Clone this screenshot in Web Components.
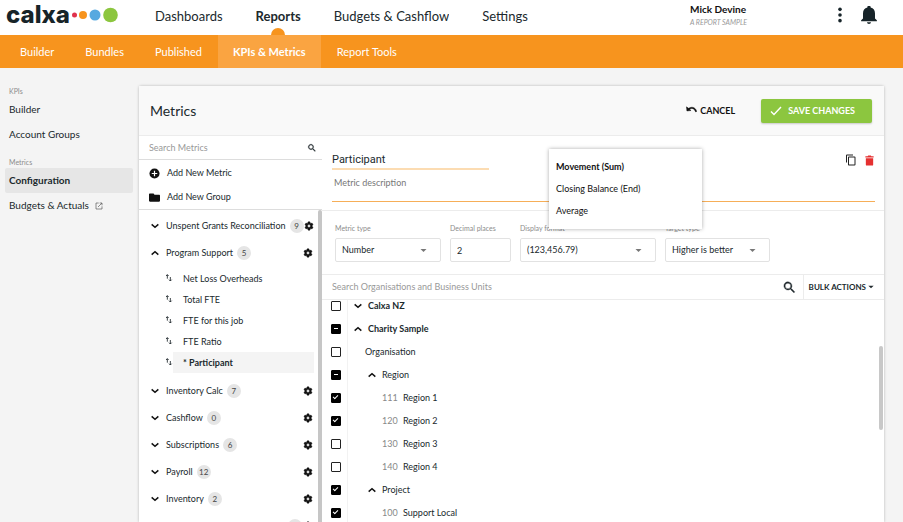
<!DOCTYPE html>
<html lang="en">
<head>
<meta charset="utf-8">
<title>Metrics</title>
<style>
  html, body { height: 100%; }

  body {
    margin: 0;
    overflow: hidden;
    font: 9px/12px Lato, "Liberation Sans", sans-serif;
    color: #20292d;
    background: #f4f4f4;
    --orange: #f7941e;
    --green: #8cc63f;
    --line: #ececec;
    --muted: #999;
  }
</style>
</head>
<body>
<metrics-app></metrics-app>

<script>
const define = (name, html, setup) => {
  const template = document.createElement("template");
  template.innerHTML = html;

  customElements.define(name, class extends HTMLElement {
    constructor() {
      super();
      this.attachShadow({ mode: "open" }).append(template.content.cloneNode(true));
    }

    $(x) { return this.shadowRoot.querySelector(x); }

    connectedCallback() {
      if (setup) setup(this);
    }
  });
};

const ICONS = {
  down: '<path d="M4 8l8 7 8-7" fill="none" stroke="currentColor" stroke-width="3.6"/>',
  up: '<path d="M4 16l8-7 8 7" fill="none" stroke="currentColor" stroke-width="3.6"/>',
  caret: '<path d="M4 8h16l-8 8z"/>',
  search: '<path d="M15.5 14h-.8l-.3-.3A6.5 6.5 0 1 0 13.700 14.400l.3.3v.8l5 5 1.500-1.500zm-6 0a4.500 4.500 0 1 1 0-9 4.500 4.500 0 0 1 0 9z" stroke="currentColor" stroke-width=".6"/>',
  gear: '<path d="M19.430 12.980c.04-.32.07-.64.07-.98s-.03-.66-.07-.98l2.110-1.650c.19-.15.24-.42.12-.64l-2-3.460c-.12-.22-.39-.3-.61-.22l-2.490 1c-.52-.4-1.080-.73-1.690-.98l-.38-2.650A.49.49 0 0 0 14 2h-4c-.25 0-.46.18-.49.42l-.38 2.650c-.61.25-1.170.59-1.690.98l-2.490-1c-.23-.09-.49 0-.61.22l-2 3.460c-.13.22-.07.49.12.64l2.110 1.650c-.04.32-.07.65-.07.98s.03.66.07.98l-2.110 1.650c-.19.15-.24.42-.12.64l2 3.460c.12.22.39.3.61.22l2.490-1c.52.4 1.080.73 1.690.98l.38 2.650c.03.24.24.42.49.42h4c.25 0 .46-.18.49-.42l.38-2.650c.61-.25 1.170-.59 1.690-.98l2.490 1c.23.09.49 0 .61-.22l2-3.460c.12-.22.07-.49-.12-.64zM12 15.500a3.500 3.500 0 1 1 0-7 3.500 3.500 0 0 1 0 7z" stroke="currentColor"/>',
  plus: '<circle cx="12" cy="12" r="11"/><path d="M12 6v12M6 12h12" stroke="#fff" stroke-width="2.600"/>',
  folder: '<path d="M10 3H2C1 3 0 4 0 5v14c0 1 1 2 2 2h20c1 0 2-1 2-2V8c0-1-1-2-2-2H12z"/>',
  arrows: '<path d="M7 14V2M3 6l4-4 4 4M16 9v12M12 17l4 4 4-4" fill="none" stroke="currentColor" stroke-width="2.600"/>',
  external: '<path d="M11 3H3v18h18v-8M14 3h7v7M21 3L9 15" fill="none" stroke="currentColor" stroke-width="2"/>',
  undo: '<path d="M1 4l1 9 9-1-3.200-2.900C12 6 18 7 21 15l2.500-1C20 4 12 3 5.800 7.300z" stroke="currentColor"/>',
  check: '<path d="M2 13l6 6L22 4" fill="none" stroke="currentColor" stroke-width="2.800"/>',
  copy: '<path d="M16 1H4a2 2 0 0 0-2 2v14h2V3h12zM19 5H8a2 2 0 0 0-2 2v14c0 1.100.9 2 2 2h11a2 2 0 0 0 2-2V7a2 2 0 0 0-2-2zm0 16H8V7h11z"/>',
  trash: '<path d="M4 7h16v14a2 2 0 0 1-2 2H6a2 2 0 0 1-2-2zM3 2.500h5L9 1h6l1 1.500h5V5.500H3z"/>',
  dots: '<circle cx="12" cy="3.500" r="2.700"/><circle cx="12" cy="12" r="2.700"/><circle cx="12" cy="20.500" r="2.700"/>',
  bell: '<path d="M12 24c1.500 0 2.600-1 2.600-2.300H9.400C9.400 23 10.500 24 12 24zM20 16.500V10c0-4-2-7-5.800-7.900V1.800a2.200 2.200 0 0 0-4.400 0v.3C6 3 4 6 4 10v6.500L1.500 19v1.400h21V19z"/>'
};

define("ui-icon", `
  <style>
    :host { display: block; flex: none; width: 10px; height: 10px; }
    svg { display: block; width: 100%; height: 100%; fill: currentColor; }
  </style>
  <svg viewBox="0 0 24 24" aria-hidden="true"></svg>
`, el => {
  el.$("svg").innerHTML = ICONS[el.getAttribute("name")];
});

define("brand-logo", `
  <style>
    :host { display: flex; align-items: flex-start; color: #172429; }
    b { width: 66px; font: 800 24px/30px Inter, sans-serif; }
    svg { display: block; width: 46px; height: 16px; margin-top: 7px; }
  </style>
  <b>calxa</b>
  <svg viewBox="0 0 46 16" aria-hidden="true">
    <circle cx="2.500" cy="8" r="2.500" fill="#e0314d"/>
    <circle cx="11" cy="8" r="4" fill="#f7941e"/>
    <circle cx="23" cy="8" r="5.500" fill="#56a9e0"/>
    <circle cx="38.500" cy="8" r="7.300" fill="#8cc63f"/>
  </svg>
`);

define("app-header", `
  <style>
    :host { display: flex; align-items: stretch; height: 35px; flex: none; padding-left: 6px; background: #fff; }
    brand-logo { width: 149px; }
    nav { display: flex; gap: 33px; flex: 1; }
    a {
      position: relative;
      padding-top: 7px;
      overflow: hidden;
      color: inherit;
      font-size: 13px;
      line-height: 18px;
      text-decoration: none;
    }
    a[aria-current] { font-weight: 700; }
    a[aria-current]::after {
      content: "";
      position: absolute;
      left: 50%;
      bottom: -7px;
      width: 14px;
      height: 14px;
      margin-left: -7px;
      border-radius: 50%;
      background: var(--orange);
    }
    .user { width: 142px; padding-top: 3px; }
    .user b { display: block; font-size: 10px; line-height: 13px; color: #111; }
    .user small { display: block; font-size: 7px; font-style: italic; color: var(--muted); }
    .tools { display: flex; gap: 12px; padding: 6px 25px 0 0; }
    button { padding: 0; border: 0; background: none; color: #172429; height: 18px; }
    ui-icon { width: 18px; height: 18px; }
    .more ui-icon { width: 16px; height: 18px; }
  </style>
  <brand-logo></brand-logo>
  <nav>
    <a href="#">Dashboards</a>
    <a href="#" aria-current="page">Reports</a>
    <a href="#">Budgets &amp; Cashflow</a>
    <a href="#">Settings</a>
  </nav>
  <div class="user"><b>Mick Devine</b><small>A REPORT SAMPLE</small></div>
  <div class="tools">
    <button class="more" aria-label="More"><ui-icon name="dots"></ui-icon></button>
    <button aria-label="Notifications"><ui-icon name="bell"></ui-icon></button>
  </div>
`);

define("report-tabs", `
  <style>
    :host { display: flex; gap: 1px; height: 33px; flex: none; padding-left: 5px; background: var(--orange); }
    a { padding: 0 15px; color: #fff; font-size: 11px; line-height: 33px; text-decoration: none; }
    a[aria-current] { font-weight: 700; background: #faa441; }
  </style>
  <a href="#">Builder</a>
  <a href="#">Bundles</a>
  <a href="#">Published</a>
  <a href="#" aria-current="page">KPIs &amp; Metrics</a>
  <a href="#">Report Tools</a>
`);

define("side-nav", `
  <style>
    :host { display: block; width: 128px; flex: none; padding: 17px 6px 0 5px; }
    h2 { margin: 0; padding-left: 4px; font-size: 7px; line-height: 12px; font-weight: 400; color: #8c8c8c; }
    ul { list-style: none; margin: 0 0 9px; padding: 0; }
    a {
      display: flex;
      align-items: center;
      gap: 6px;
      padding-left: 4px;
      font-size: 10px;
      line-height: 25px;
      color: inherit;
      text-decoration: none;
      border-radius: 2px;
    }
    a[aria-current] { font-weight: 700; background: #e6e6e6; }
    ui-icon { width: 8px; height: 8px; color: #555; }
  </style>
  <h2>KPIs</h2>
  <ul>
    <li><a href="#">Builder</a></li>
    <li><a href="#">Account Groups</a></li>
  </ul>
  <h2>Metrics</h2>
  <ul>
    <li><a href="#" aria-current="page">Configuration</a></li>
    <li><a href="#">Budgets &amp; Actuals <ui-icon name="external"></ui-icon></a></li>
  </ul>
`);

define("panel-header", `
  <style>
    :host { display: flex; align-items: center; height: 49px; flex: none; padding: 0 12px 0 11px; background: #f9f9f9; border-bottom: 1px solid var(--line); }
    h1 { flex: 1; margin: 0; font-size: 14px; line-height: 20px; font-weight: 400; }
    button { display: flex; align-items: center; font: inherit; font-weight: 700; border: 0; }
    .cancel { gap: 3px; margin-right: 26px; padding: 0; color: #111; background: none; }
    .cancel ui-icon { width: 11px; height: 11px; }
    .save { gap: 6px; height: 24px; padding: 0 17px 0 9px; color: #fff; background: var(--green); border-radius: 2px; box-shadow: 0 1px 2px #0003; }
    .save ui-icon { width: 12px; height: 12px; }
  </style>
  <h1>Metrics</h1>
  <button class="cancel"><ui-icon name="undo"></ui-icon>CANCEL</button>
  <button class="save"><ui-icon name="check"></ui-icon>SAVE CHANGES</button>
`);

define("metric-group", `
  <style>
    :host { display: block; }
    .head { display: flex; align-items: center; height: 27px; padding: 0 5px 0 11px; }
    .head ui-icon { color: #111; }
    button { padding: 0; border: 0; background: none; font: inherit; }
    .gear { margin-left: auto; }
    .toggle { margin-right: 6px; }
    .name { white-space: nowrap; }
    .name:empty { width: 118px; }
    .badge {
      min-width: 14px;
      min-height: 14px;
      margin-left: 4px;
      text-align: center;
      font-size: 8px;
      line-height: 14px;
      border-radius: 7px;
      background: #e5e5e5;
      color: #444;
    }
    .items:not([hidden]) { display: block; padding: 2px 0 4px; }
  </style>
  <div class="head">
    <button class="toggle" aria-label="Toggle group"><ui-icon></ui-icon></button>
    <span class="name"></span>
    <span class="badge"></span>
    <button class="gear" aria-label="Group settings"><ui-icon name="gear"></ui-icon></button>
  </div>
  <div class="items"><slot></slot></div>
`, el => {
  const open = el.hasAttribute("open");
  const icon = document.createElement("ui-icon");
  icon.setAttribute("name", open ? "up" : "down");
  el.$(".toggle").replaceChildren(icon);
  el.$(".name").textContent = el.getAttribute("name");
  el.$(".badge").textContent = el.getAttribute("count");
  el.$(".items").hidden = !open;
});

define("metric-item", `
  <style>
    :host { display: flex; align-items: center; height: 21px; padding: 0 4px 0 26px; }
    ui-icon { width: 8px; height: 8px; margin-bottom: 2px; }
    a { flex: 1; padding-left: 10px; line-height: 21px; color: inherit; text-decoration: none; }
    :host([selected]) a { background: #f4f4f4; font-weight: 700; }
  </style>
  <ui-icon name="arrows"></ui-icon>
  <a href="#"><slot></slot></a>
`);

define("metric-list", `
  <style>
    :host { display: flex; flex-direction: column; width: 183px; flex: none; }
    .search { display: flex; align-items: center; height: 23px; padding: 0 5px 0 10px; border-bottom: 1px solid #ddd; }
    input { flex: 1; min-width: 0; padding: 0; border: 0; outline: 0; background: none; font: inherit; }
    input::placeholder { color: var(--muted); opacity: 1; }
    .actions { padding: 1px 0 0; border-bottom: 1px solid #ddd; }
    .actions button { display: flex; align-items: center; gap: 7px; width: 100%; height: 24px; padding: 0 10px; border: 0; background: none; font: inherit; color: inherit; }
    .scroll { display: flex; flex: 1; min-height: 0; }
    .groups { flex: 1; min-width: 0; overflow: hidden; padding-top: 2px; }
    .track { width: 4px; background: #c6c6c6; border-radius: 2px 2px 0 0; }
    .actions ui-icon { width: 11px; height: 11px; color: #111; }
  </style>
  <div class="search">
    <input type="search" placeholder="Search Metrics" aria-label="Search metrics">
    <ui-icon name="search"></ui-icon>
  </div>
  <div class="actions">
    <button><ui-icon name="plus"></ui-icon>Add New Metric</button>
    <button><ui-icon name="folder"></ui-icon>Add New Group</button>
  </div>
  <div class="scroll">
    <div class="groups">
      <metric-group name="Unspent Grants Reconciliation" count="9"></metric-group>
      <metric-group name="Program Support" count="5" open>
        <metric-item>Net Loss Overheads</metric-item>
        <metric-item>Total FTE</metric-item>
        <metric-item>FTE for this job</metric-item>
        <metric-item>FTE Ratio</metric-item>
        <metric-item selected>* Participant</metric-item>
      </metric-group>
      <metric-group name="Inventory Calc" count="7"></metric-group>
      <metric-group name="Cashflow" count="0"></metric-group>
      <metric-group name="Subscriptions" count="6"></metric-group>
      <metric-group name="Payroll" count="12"></metric-group>
      <metric-group name="Inventory" count="2"></metric-group>
      <metric-group name="" count=""></metric-group>
    </div>
    <div class="track"></div>
  </div>
`);

define("select-field", `
  <style>
    :host { display: block; }
    label { display: block; font-size: 7px; color: #8c8c8c; line-height: 12px; margin-bottom: 4px; }
    .box { display: flex; align-items: center; height: 22px; border: 1px solid #e2e2e2; border-radius: 2px; background: #fff; }
    select, input {
      flex: 1;
      min-width: 0;
      height: 100%;
      padding: 0 6px;
      border: 0;
      outline: 0;
      appearance: none;
      background: none;
      font: inherit;
      color: inherit;
    }
    ui-icon { width: 9px; height: 9px; margin-right: 12px; color: #777; }
  </style>
  <label for="control"></label>
  <div class="box"></div>
`, el => {
  const value = el.getAttribute("value");
  el.$("label").textContent = el.getAttribute("label");
  el.$(".box").innerHTML = el.hasAttribute("text")
    ? `<input id="control" value="${value}">`
    : `<select id="control"><option>${value}</option></select><ui-icon name="caret"></ui-icon>`;
});

define("option-menu", `
  <style>
    :host { display: block; padding: 7px 0; background: #fff; box-shadow: 0 0 4px #0005; color: #111; }
    ul { list-style: none; margin: 0; padding: 0; }
    li { padding-left: 7px; line-height: 22px; }
    [aria-selected="true"] { font-weight: 700; }
  </style>
  <ul role="listbox" aria-label="Aggregation">
    <li role="option" aria-selected="true">Movement (Sum)</li>
    <li role="option" aria-selected="false">Closing Balance (End)</li>
    <li role="option" aria-selected="false">Average</li>
  </ul>
`);

define("metric-editor", `
  <style>
    :host { display: block; position: relative; }
    .details { display: flex; height: 75px; box-sizing: border-box; padding: 15px 9px 9px 10px; border-bottom: 1px solid var(--line); justify-content: space-between; flex-wrap: wrap; }
    input { box-sizing: border-box; padding: 0; border: 0; border-radius: 0; outline: 0; background: none; color: inherit; }
    .name { width: 157px; height: 19px; border-bottom: 2px solid #fcdcb2; font: 11px/16px Roboto, sans-serif; }
    .about { width: 100%; height: 32px; padding: 0 2px 7px; border-bottom: 1px solid #f6ae58; font: inherit; }
    .about::placeholder { color: #777; opacity: 1; }
    .tools { display: flex; gap: 7px; padding-top: 3px; }
    button { height: 12px; padding: 0; border: 0; background: none; color: #222; }
    .tools ui-icon { width: 12px; height: 12px; }
    .delete { color: #e53030; }
    .delete ui-icon { width: 11px; height: 11px; }
    .fields { display: flex; gap: 9px; padding: 11px 13px 12px; border-bottom: 1px solid var(--line); }
    .type { width: 106px; }
    .places { width: 61px; }
    .format { width: 136px; }
    .target { width: 105px; }
    option-menu { position: absolute; left: 227px; top: 13px; width: 153px; box-sizing: border-box; z-index: 1; }
  </style>
  <div class="details">
    <input class="name" value="Participant" aria-label="Metric name">
    <div class="tools">
      <button aria-label="Duplicate"><ui-icon name="copy"></ui-icon></button>
      <button class="delete" aria-label="Delete"><ui-icon name="trash"></ui-icon></button>
    </div>
    <input class="about" placeholder="Metric description" aria-label="Metric description">
  </div>
  <div class="fields">
    <select-field class="type" label="Metric type" value="Number"></select-field>
    <select-field class="places" label="Decimal places" value="2" text></select-field>
    <select-field class="format" label="Display format" value="(123,456.79)"></select-field>
    <select-field class="target" label="Target type" value="Higher is better"></select-field>
  </div>
  <option-menu></option-menu>
`);

define("unit-row", `
  <style>
    :host { display: flex; align-items: center; height: 23px; }
    label { display: flex; align-items: center; }
    input {
      appearance: none;
      width: 10px;
      height: 10px;
      margin: 0 12px 0 0;
      border: 1px solid #222;
      border-radius: 1px;
      box-sizing: border-box;
      position: relative;
    }
    input:checked, input:indeterminate { background: #000; border-color: #000; }
    input:checked::after {
      content: "";
      position: absolute;
      left: 2px;
      top: 0;
      width: 2px;
      height: 4px;
      border: solid #fff;
      border-width: 0 1px 1px 0;
      transform: rotate(45deg);
    }
    input:indeterminate::after { content: ""; position: absolute; left: 2px; top: 3px; width: 4px; height: 1px; background: #fff; }
    .indent { display: flex; align-items: center; }
    :host([level="1"]) .indent { padding-left: 12px; }
    :host([level="2"]) .indent { padding-left: 14px; }
    :host([level="3"]) .indent { padding-left: 29px; }
    :host([level="0"]) { font-weight: 700; }
    ui-icon { margin-right: 5px; color: #111; }
    .code { width: 21px; color: #888; }
  </style>
  <label>
    <input type="checkbox">
    <span class="indent"><span class="lead"></span><slot></slot></span>
  </label>
`, el => {
  const box = el.$("input");
  const state = el.getAttribute("state");
  box.checked = state === "on";
  box.indeterminate = state === "mixed";
  const lead = el.$(".lead");
  if (el.hasAttribute("icon"))
    lead.innerHTML = `<ui-icon name="${el.getAttribute("icon")}"></ui-icon>`;
  if (el.hasAttribute("code")) {
    lead.className = "lead code";
    lead.textContent = el.getAttribute("code");
  }
});

define("unit-list", `
  <style>
    :host { display: flex; flex-direction: column; flex: 1; min-height: 0; }
    .bar { display: flex; align-items: center; height: 24px; flex: none; border-bottom: 1px solid var(--line); }
    input { flex: 1; min-width: 0; padding: 0 0 0 10px; border: 0; outline: 0; background: none; font: inherit; }
    input::placeholder { color: var(--muted); opacity: 1; }
    .bar ui-icon { width: 15px; height: 15px; }
    button { display: flex; align-items: center; gap: 1px; height: 100%; margin-left: 6px; padding: 0 9px 0 5px; border: 0; border-left: 1px solid var(--line); background: none; font: inherit; font-size: 8px; font-weight: 700; color: inherit; }
    .bar button ui-icon { width: 8px; height: 8px; }
    .scroll { display: flex; flex: 1; min-height: 0; }
    .rows { flex: 1; overflow: hidden; padding: 0 0 0 9px; margin-top: -6px; clip-path: inset(6px 0 0); background: linear-gradient(#f2f2f2, #f2f2f2) 25px 0 / 1px 100% no-repeat; }
    .thumb { width: 4px; height: 84px; margin: 46px 1px 0 0; border-radius: 2px; background: #c8c8c8; }
  </style>
  <div class="bar">
    <input type="search" placeholder="Search Organisations and Business Units" aria-label="Search organisations and business units">
    <ui-icon name="search"></ui-icon>
    <button>BULK ACTIONS <ui-icon name="caret"></ui-icon></button>
  </div>
  <div class="scroll">
    <div class="rows">
      <unit-row level="0" icon="down">Calxa NZ</unit-row>
      <unit-row level="0" icon="up" state="mixed">Charity Sample</unit-row>
      <unit-row level="1">Organisation</unit-row>
      <unit-row level="2" icon="up" state="mixed">Region</unit-row>
      <unit-row level="3" code="111" state="on">Region 1</unit-row>
      <unit-row level="3" code="120" state="on">Region 2</unit-row>
      <unit-row level="3" code="130">Region 3</unit-row>
      <unit-row level="3" code="140">Region 4</unit-row>
      <unit-row level="2" icon="up" state="on">Project</unit-row>
      <unit-row level="3" code="100" state="on">Support Local</unit-row>
    </div>
    <div class="thumb"></div>
  </div>
`);

define("metrics-app", `
  <style>
    :host { display: flex; flex-direction: column; height: 100vh; }
    .page { display: flex; flex: 1; min-height: 0; }
    main { display: flex; flex-direction: column; flex: 1; min-width: 0; margin: 18px 19px 0 0; background: #fff; border-radius: 2px 2px 0 0; box-shadow: 0 0 3px #0004; }
    .columns { display: flex; flex: 1; min-height: 0; }
    section { display: flex; flex-direction: column; flex: 1; min-width: 0; }
  </style>
  <app-header></app-header>
  <report-tabs></report-tabs>
  <div class="page">
    <side-nav></side-nav>
    <main>
      <panel-header></panel-header>
      <div class="columns">
        <metric-list></metric-list>
        <section>
          <metric-editor></metric-editor>
          <unit-list></unit-list>
        </section>
      </div>
    </main>
  </div>
`);
</script>
</body>
</html>
